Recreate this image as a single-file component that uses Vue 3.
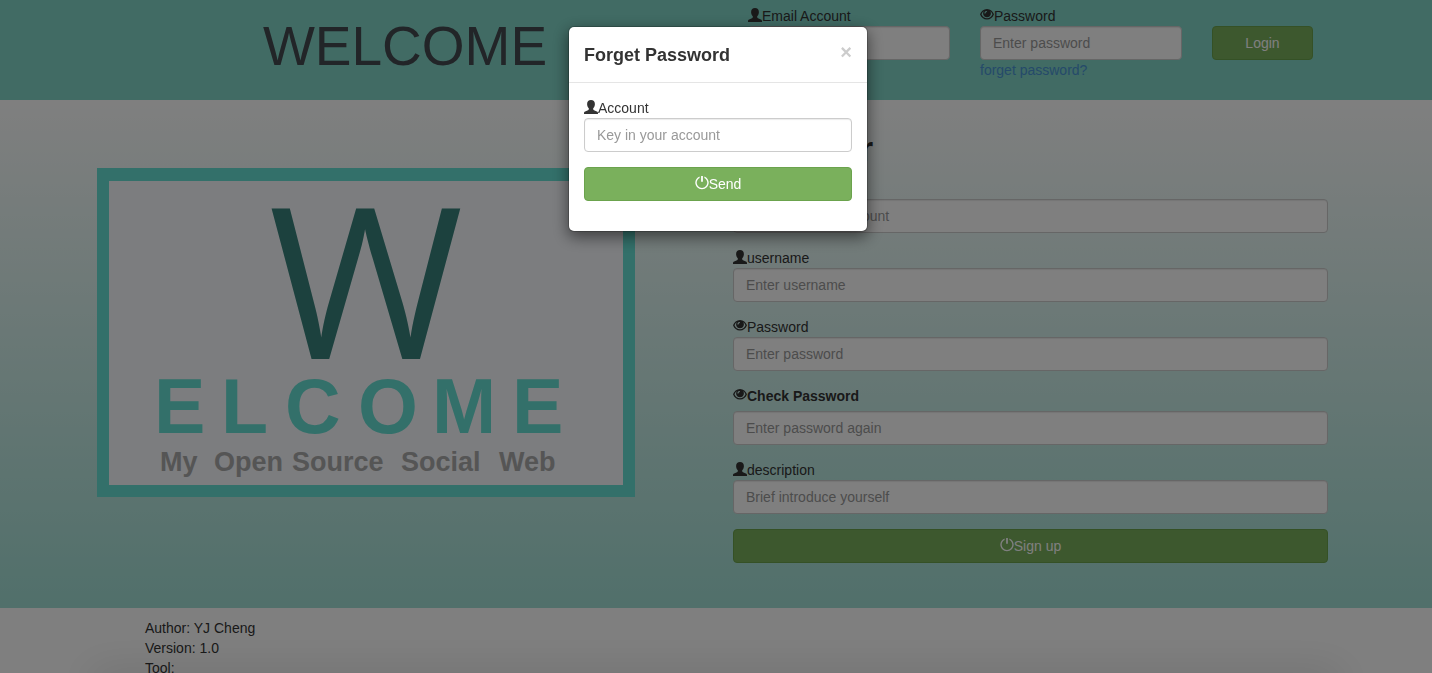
<script setup>
import { ref, h } from 'vue'

const icons = {
  user: 'M7 0C9.4 0 10.9 1.5 10.9 3.9C10.9 5.8 10.2 7.3 9.2 8.2V9.3C9.2 9.8 9.5 10.1 10 10.3L12.9 11.5C13.7 11.9 14 12.4 14 13.1V14H0V13.1C0 12.4 .3 11.9 1.1 11.5L4 10.3C4.5 10.1 4.8 9.8 4.8 9.3V8.2C3.8 7.3 3.1 5.8 3.1 3.9C3.1 1.5 4.6 0 7 0Z',
  eye: 'M7 1C10.4 1 12.8 3.3 14 6.2C12.8 9.3 10.4 11.6 7 11.6C3.6 11.6 1.2 9.3 0 6.2C1.2 3.3 3.6 1 7 1ZM1.5 6.2C2.6 8.6 4.5 10.3 7 10.3C9.5 10.3 11.4 8.6 12.5 6.2C11.9 4.9 11.1 3.8 10 3.1C10.6 3.8 10.9 4.6 10.9 5.4C10.9 7.6 9.2 9.2 7 9.2C4.8 9.2 3.1 7.6 3.1 5.4C3.1 4.6 3.4 3.8 4 3.1C2.9 3.8 2.1 4.9 1.5 6.2ZM6.3 3C5.1 3.2 4.4 4.1 4.5 5.3C4.7 6.1 5.5 5.8 5.6 5.1C5.7 4.5 6 4.2 6.6 4C7.3 3.7 7.1 3 6.3 3Z',
  off: 'M6.1 0H7.9V5.8H6.1ZM9.4 .4C12 1.4 13.7 3.8 13.7 6.6C13.7 10.3 10.7 13.3 7 13.3C3.3 13.3 .3 10.3 .3 6.6C.3 3.8 2 1.4 4.6 .4V2C2.8 2.9 1.7 4.6 1.7 6.6C1.7 9.5 4.1 11.9 7 11.9C9.9 11.9 12.3 9.5 12.3 6.6C12.3 4.6 11.2 2.9 9.4 2Z',
}

const Icon = (props) =>
  h('svg', { viewBox: '0 0 14 14', width: 14, height: 14, 'aria-hidden': 'true' },
    [h('path', { d: icons[props.name], fill: 'currentColor', 'fill-rule': 'evenodd' })])
Icon.props = ['name']

const modalOpen = ref(true)

const fields = [
  { id: 'reg-account', icon: 'user', label: 'Account', type: 'text', hint: 'Enter an email account' },
  { id: 'reg-name', icon: 'user', label: 'username', type: 'text', hint: 'Enter username' },
  { id: 'reg-password', icon: 'eye', label: 'Password', type: 'password', hint: 'Enter password' },
  { id: 'reg-check', icon: 'eye', label: 'Check Password', type: 'password', hint: 'Enter password again', strong: true },
  { id: 'reg-desc', icon: 'user', label: 'description', type: 'text', hint: 'Brief introduce yourself' },
]
</script>

<template>
  <div class="page">
    <header class="top">
      <h1 class="brand">WELCOME</h1>
      <form class="login" @submit.prevent>
        <div class="field">
          <label for="login-email"><Icon name="user" />Email Account</label>
          <input id="login-email" type="text" placeholder="Enter email" />
        </div>
        <div class="field">
          <label for="login-password"><Icon name="eye" />Password</label>
          <input id="login-password" type="password" placeholder="Enter password" />
          <a href="#" @click.prevent="modalOpen = true">forget password?</a>
        </div>
        <button class="btn login-btn" type="submit">Login</button>
      </form>
    </header>

    <main class="main">
      <svg class="logo" viewBox="0 0 538 329" role="img" aria-label="Welcome, My Open Source Social Web">
        <rect class="logo-frame" width="538" height="329" />
        <rect class="logo-panel" x="12" y="13" width="514" height="304" />
        <text class="logo-w" x="269" y="191">W</text>
        <text class="logo-name" x="57 124 188 261 335 415" y="265">ELCOME</text>
        <g class="logo-sub">
          <text x="63" y="303">My</text>
          <text x="117" y="303">Open</text>
          <text x="195" y="303">Source</text>
          <text x="304" y="303">Social</text>
          <text x="402" y="303">Web</text>
        </g>
      </svg>
      <form class="register" @submit.prevent>
        <h2>Register</h2>
        <div v-for="f in fields" :key="f.id" class="field" :class="{ strong: f.strong }">
          <label :for="f.id"><Icon :name="f.icon" />{{ f.label }}</label>
          <input :id="f.id" :type="f.type" :placeholder="f.hint" />
        </div>
        <button class="btn block" type="submit"><Icon name="off" />Sign up</button>
      </form>
    </main>

    <footer class="foot">
      <p>Author: YJ Cheng</p>
      <p>Version: 1.0</p>
      <p>Tool:</p>
    </footer>

    <div v-if="modalOpen" class="backdrop">
      <section class="modal" role="dialog" aria-modal="true" aria-labelledby="modal-title">
        <div class="modal-head">
          <h4 id="modal-title">Forget Password</h4>
          <button class="close" type="button" aria-label="Close" @click="modalOpen = false">×</button>
        </div>
        <form class="modal-body" @submit.prevent>
          <div class="field">
            <label for="forgot-account"><Icon name="user" />Account</label>
            <input id="forgot-account" type="text" placeholder="Key in your account" />
          </div>
          <button class="btn block" type="submit"><Icon name="off" />Send</button>
        </form>
      </section>
    </div>
  </div>
</template>

<style>
body {
  margin: 0;
}
</style>

<style scoped>
.page {
  height: 100vh;
  overflow: hidden;
  background: #fff;
  color: #333;
  font: 14px/20px "Liberation Sans", Arial, sans-serif;
}
.page * {
  box-sizing: border-box;
}
h1, h2, h4, p {
  margin: 0;
}
.top {
  display: grid;
  grid-template-columns: 582fr 565fr;
  column-gap: 52px;
  min-height: 100px;
  padding: 6px 119px 0 114px;
  background: #82d6c8;
}
.brand {
  padding-top: 10px;
  text-align: center;
  color: #454a50;
  font-size: 55px;
  font-weight: 400;
  line-height: 60px;
}
.login {
  display: grid;
  grid-template-columns: 2fr 2fr 1fr;
  column-gap: 30px;
  align-items: start;
}
.field {
  display: flex;
  flex-direction: column;
}
label {
  display: flex;
  align-items: center;
}
svg {
  flex: none;
}
label svg,
.btn svg {
  margin-bottom: 2px;
}
input {
  width: 100%;
  height: 34px;
  padding: 6px 12px;
  border: 1px solid #ccc;
  border-radius: 4px;
  background: #fff;
  box-shadow: inset 0 1px 1px rgba(0, 0, 0, 0.08);
  color: #555;
  font: inherit;
}
input::placeholder {
  color: #999;
  opacity: 1;
}
a {
  color: #4a94d4;
  text-decoration: none;
}
.btn {
  display: flex;
  align-items: center;
  justify-content: center;
  height: 34px;
  border: 1px solid #6ba34d;
  border-radius: 4px;
  background: #7ab05c;
  color: #fff;
  font: inherit;
}
.login-btn {
  margin-top: 20px;
}
.block {
  width: 100%;
}
.main {
  display: grid;
  grid-template-columns: 538fr 595fr;
  column-gap: 98px;
  align-items: start;
  padding: 29px 104px 45px 97px;
  background: linear-gradient(#fff, #a2e0d6);
}
.logo {
  display: block;
  width: 100%;
  margin-top: 39px;
}
.logo-frame {
  fill: #66e0d4;
}
.logo-panel {
  fill: #f8fafe;
}
.logo-w {
  fill: #38827c;
  font: 500 211px "Open Sans", "Noto Sans", sans-serif;
  text-anchor: middle;
}
.logo-name {
  fill: #66e0d4;
  font: 700 77px "Liberation Sans", Arial, sans-serif;
}
.logo-sub {
  fill: #aaa;
  font: 700 27px "Liberation Sans", Arial, sans-serif;
}
.register h2 {
  margin-bottom: 10px;
  font-size: 35px;
  line-height: 40px;
  color: #333;
}
.register .field {
  margin-bottom: 15px;
}
.strong label {
  margin-bottom: 5px;
  font-weight: 700;
}
.foot {
  padding: 10px 145px;
}
.backdrop {
  position: fixed;
  inset: 0;
  padding-left: 4px;
  background: rgba(0, 0, 0, 0.5);
}
.backdrop::after {
  content: "";
  position: absolute;
  right: 90px;
  bottom: -20px;
  left: 90px;
  height: 20px;
  border-radius: 6px;
  box-shadow: 0 0 40px rgba(0, 0, 0, 0.16);
}
.modal {
  width: 300px;
  margin: 26px auto 0;
  border: 1px solid rgba(0, 0, 0, 0.2);
  border-radius: 6px;
  background: #fff;
  background-clip: padding-box;
  box-shadow: 0 5px 15px rgba(0, 0, 0, 0.5);
}
.modal-head {
  display: flex;
  justify-content: space-between;
  align-items: flex-start;
  padding: 15px 15px 14px;
  border-bottom: 1px solid #e5e5e5;
}
.modal-head h4 {
  font-size: 18px;
  line-height: 26px;
}
.close {
  padding: 0;
  border: 0;
  background: none;
  color: #ccc;
  font: 700 20px/20px "Liberation Sans", Arial, sans-serif;
}
.modal-body {
  padding: 15px 15px 30px;
}
.modal-body .field {
  margin-bottom: 15px;
}
</style>
